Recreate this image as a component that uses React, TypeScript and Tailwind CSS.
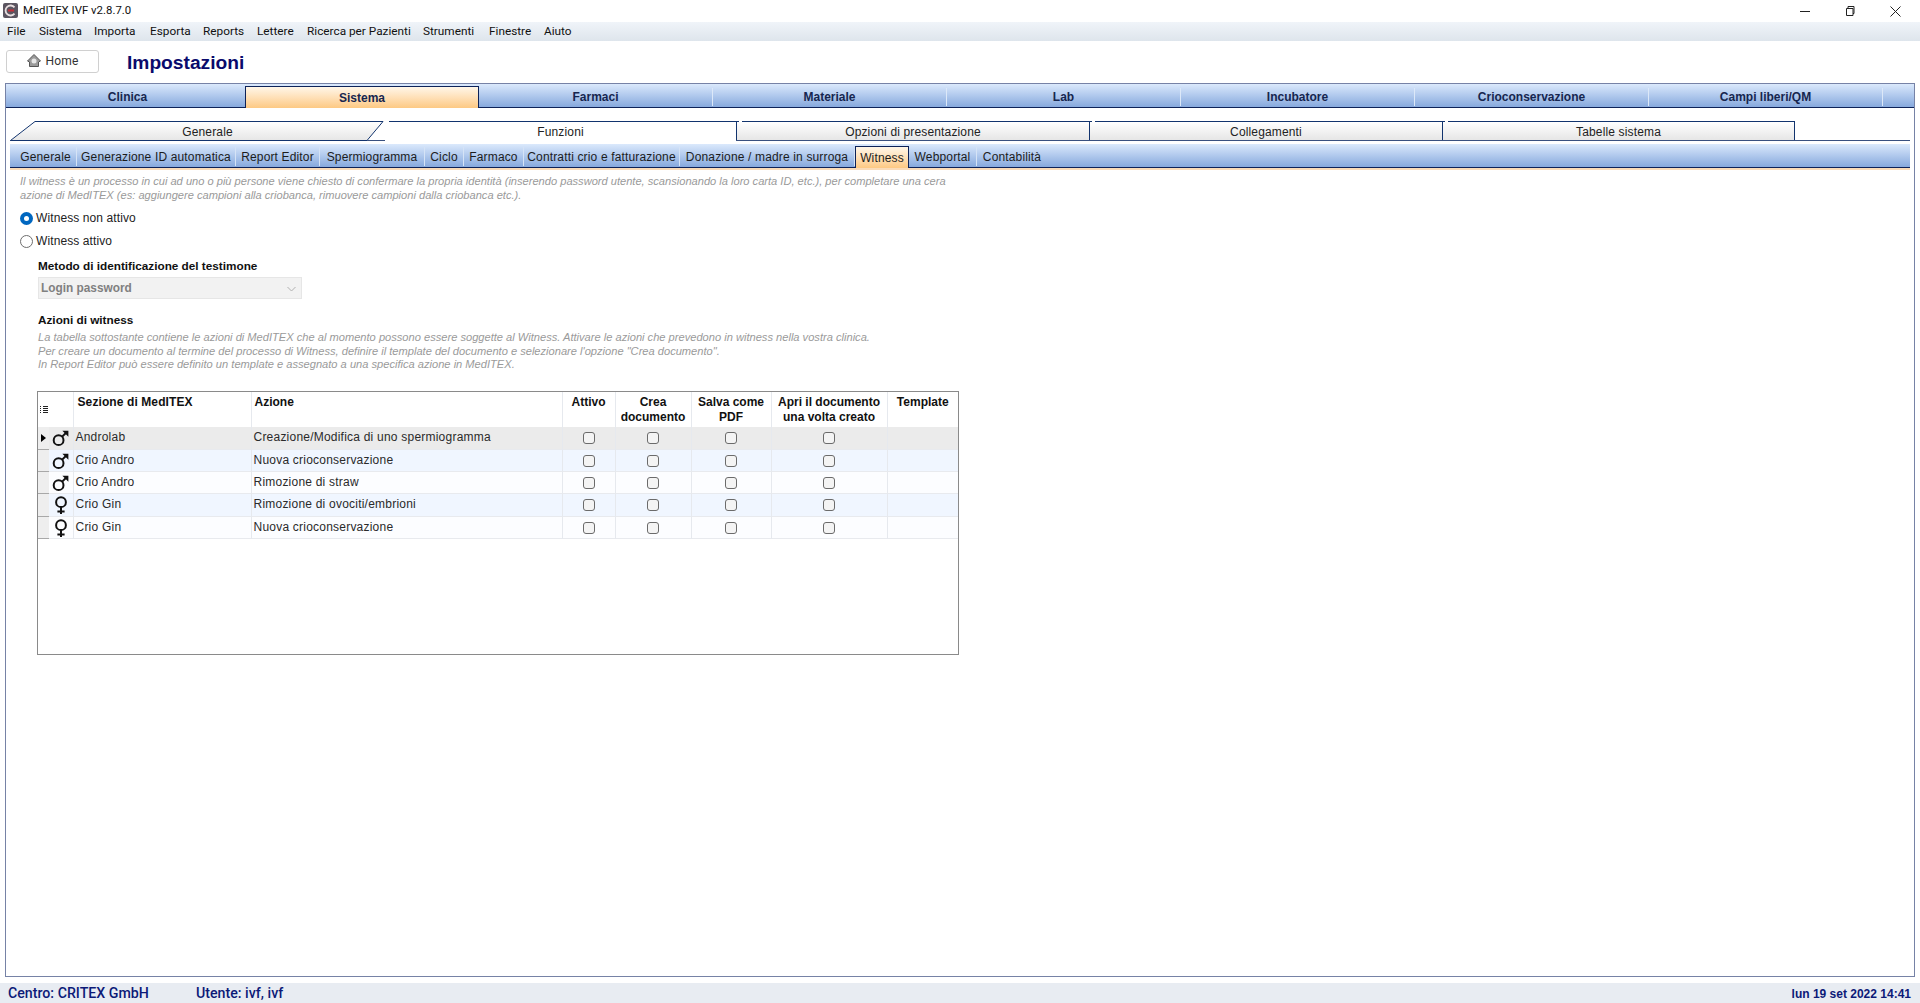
import React from "react";

const menu = [
  ["File", "w-[32px]"], ["Sistema", "w-[55px]"], ["Importa", "w-[56px]"], ["Esporta", "w-[53px]"], ["Reports", "w-[54px]"],
  ["Lettere", "w-[50px]"], ["Ricerca per Pazienti", "w-[116px]"], ["Strumenti", "w-[66px]"], ["Finestre", "w-[55px]"], ["Aiuto", "w-[40px]"],
];
const topTabs = ["Sistema", "Farmaci", "Materiale", "Lab", "Incubatore", "Crioconservazione", "Campi liberi/QM"];
const subTabs = [
  ["Generale", "w-[67px] pl-[5px]"], ["Generazione ID automatica", "w-[159px]"], ["Report Editor", "w-[84px]"], ["Spermiogramma", "w-[105px]"],
  ["Ciclo", "w-[39px]"], ["Farmaco", "w-[60px]"], ["Contratti crio e fatturazione", "w-[156px]"], ["Donazione / madre in surroga", "w-[175px]"],
];
const rows: [string, string, string, string][] = [
  ["m", "Androlab", "Creazione/Modifica di uno spermiogramma", "h-[23px] bg-[#ebebeb]"],
  ["m", "Crio Andro", "Nuova crioconservazione", "h-[22px] bg-[#f0f6ff]"],
  ["m", "Crio Andro", "Rimozione di straw", "h-[22px] bg-[#fcfdff]"],
  ["f", "Crio Gin", "Rimozione di ovociti/embrioni", "h-[23px] bg-[#f0f6ff]"],
  ["f", "Crio Gin", "Nuova crioconservazione", "h-[22px] bg-[#fcfdff]"],
];

function Mars() {
  return (
    <svg width="20" height="20" viewBox="0 0 20 20" fill="none" stroke="#111">
      <circle cx="7.6" cy="12.2" r="4.9" strokeWidth="2" />
      <path d="M11.2 8.6 15.6 4.2" strokeWidth="2" />
      <path d="M11.4 2.8h6v6z" fill="#111" stroke="none" />
    </svg>
  );
}
function Venus() {
  return (
    <svg width="20" height="20" viewBox="0 0 20 20" fill="none" stroke="#111" strokeWidth="2">
      <circle cx="10" cy="7.2" r="4.9" />
      <path d="M10 12v7M6.4 16.6h7.2" />
    </svg>
  );
}
function Check() {
  return <div className="mx-auto h-[12px] w-[12px] rounded-[3px] border border-[#6b6b6b] bg-[#f4f4f4]" />;
}
function Notch() {
  return <span className="absolute -top-[1px] left-[2px] h-[1px] w-[3px] bg-white" />;
}

export default function App() {
  return (
    <div className="flex h-[1003px] w-[1920px] flex-col overflow-hidden bg-white font-['Liberation_Sans',sans-serif] text-[12px] text-[#222]">
      <div className="flex h-[22px] items-center justify-between pl-[3px]">
        <div className="flex items-center gap-[5px] font-['Roboto',sans-serif] text-[11.4px] text-[#111]">
          <svg width="15" height="15" viewBox="0 0 15 15">
            <rect width="15" height="15" rx="2" fill="#5b5560" />
            <path d="M11.5 4.4A5 5 0 1 0 11.5 10.6" fill="none" stroke="#e9dfe0" strokeWidth="1.8" />
            <path d="M5 7.5h6" stroke="#c4303a" strokeWidth="2" />
          </svg>
          <span>MedITEX IVF v2.8.7.0</span>
        </div>
        <div className="flex items-center pr-[19px]">
          <svg width="10" height="10" viewBox="0 0 10 10" className="mr-[35px]" stroke="#222"><path d="M0 5.5h10" /></svg>
          <svg width="10" height="10" viewBox="0 0 10 10" className="mr-[35px]" fill="none" stroke="#222"><path d="M1.5 2.5h6.5v7h-6.5zM3 2.5V.5h6v7H8" /></svg>
          <svg width="11" height="11" viewBox="0 0 11 11" stroke="#222"><path d="M.5.5l10 10M10.5.5l-10 10" /></svg>
        </div>
      </div>

      <div className="flex h-[19px] items-center bg-gradient-to-b from-[#f0f4f9] to-[#dee5ec] pl-[2px] pt-[1px] font-['Roboto',sans-serif] text-[11.8px] text-[#111]">
        {menu.map(([t, w]) => (
          <span key={t} className={`${w} whitespace-nowrap pl-[5px]`}>{t}</span>
        ))}
      </div>

      <div className="flex h-[42px] items-start pl-[6px] pt-[9px]">
        <div className="flex h-[23px] w-[93px] items-center justify-center gap-[3px] rounded-[3px] border border-[#d0d0d0] bg-white pb-[2px] font-['Roboto',sans-serif] tracking-[0.2px] text-[#333]">
          <svg width="16" height="16" viewBox="0 0 16 16">
            <path d="M8 1.5 1.5 8 3.5 9v4.5h9V9L14.5 8z" fill="#9a9a9a" stroke="#555" strokeWidth="1" />
            <circle cx="8" cy="8" r="2.5" fill="#e6e6e6" />
          </svg>
          <span>Home</span>
        </div>
        <h1 className="ml-[28px] pt-[1px] text-[19.2px] font-bold leading-[24px] text-[#0a0a6c]">Impostazioni</h1>
      </div>

      <div className="mx-[5px] mb-[6px] flex flex-1 flex-col border border-[#7682a6]">
        <div className="flex h-[24px] border-b border-[#0d2258] bg-gradient-to-b from-[#dbe9fc] to-[#87a9dd] font-bold text-[#16264f]">
          <div className="flex w-[239px] items-center justify-center pl-[4px] pt-[2px]">Clinica</div>
          {topTabs.map((t) => (
            <div
              key={t}
              className={
                t === "Sistema"
                  ? "mt-[2px] flex h-[22px] w-[234px] items-center justify-center border-x border-t border-[#0d2258] bg-gradient-to-b from-[#fff6e8] to-[#fdc983] text-[#16264f]"
                  : "mt-[4px] flex h-[18px] w-[234px] items-center justify-center border-r border-[#dce8f8]"
              }
            >
              {t}
            </div>
          ))}
        </div>

        <div className="mx-[4px] mt-[13px] flex h-[20px] border-b border-[#39507f] text-center tracking-[0.15px] text-[#222]">
          <div className="relative flex w-[375px] items-center justify-center">
            <svg width="375" height="20" viewBox="0 0 375 20" className="absolute left-0 top-0">
              <defs>
                <linearGradient id="gt" x1="0" y1="0" x2="0" y2="1">
                  <stop offset="0" stopColor="#ffffff" />
                  <stop offset="1" stopColor="#e6e6e6" />
                </linearGradient>
              </defs>
              <path d="M.5 19.5 25 .5H373L357 19.5z" fill="url(#gt)" stroke="#12346e" />
            </svg>
            <span className="relative pl-[20px] pt-[3px]">Generale</span>
          </div>
          <div className="relative -mb-[1px] flex h-[20px] w-[351px] items-center justify-center bg-white pt-[1px]">
            <span className="absolute left-[4px] right-0 top-0 border-t border-[#12346e]" />
            Funzioni
          </div>
          {["Opzioni di presentazione", "Collegamenti", "Tabelle sistema"].map((t, i) => (
            <div
              key={t}
              className={
                i === 2
                  ? "relative flex w-[353px] items-center justify-center border-x border-t border-[#12346e] bg-gradient-to-b from-white to-[#e6e6e6] pt-[1px]"
                  : "relative flex w-[353px] items-center justify-center border-l border-t border-[#12346e] bg-gradient-to-b from-white to-[#e6e6e6] pt-[1px]"
              }
            >
              <Notch />
              {t}
            </div>
          ))}
        </div>

        <div className="mx-[4px] mt-[3px] flex h-[26px] border-b-[2px] border-[#fbdcb9] tracking-[0.15px] text-[#1c1c1c]">
          <div className="flex h-[24px] flex-1 border-b border-[#0d2258] bg-gradient-to-b from-[#dbe9fc] to-[#87a9dd]">
            {subTabs.map(([t, w]) => (
              <div key={t} className={`${w} mb-[1px] mt-[3px] flex items-center justify-center whitespace-nowrap border-r border-[#d5e3f6]`}>{t}</div>
            ))}
            <div className="mt-[2px] flex h-[22px] w-[54px] items-center justify-center border-x border-t border-[#0d2258] bg-gradient-to-b from-[#fff6e8] to-[#fdc983]">Witness</div>
            <div className="mb-[1px] mt-[3px] flex w-[68px] items-center justify-center border-r border-[#d5e3f6]">Webportal</div>
            <div className="mb-[1px] mt-[3px] flex w-[70px] items-center justify-center">Contabilità</div>
          </div>
        </div>

        <div className="flex flex-col pl-[14px]">
          <p className="mt-[4px] text-[11.1px] italic leading-[14px] text-[#9a9a9a]">
            Il witness è un processo in cui ad uno o più persone viene chiesto di confermare la propria identità (inserendo password utente, scansionando la loro carta ID, etc.), per completare una cera
            <br />
            azione di MedITEX (es: aggiungere campioni alla criobanca, rimuovere campioni dalla criobanca etc.).
          </p>
          <div className="mt-[6px] flex h-[20px] items-center gap-[3px] tracking-[0.1px]">
            <div className="flex h-[13px] w-[13px] items-center justify-center rounded-full bg-[#0067c0]">
              <div className="h-[5px] w-[5px] rounded-full bg-white" />
            </div>
            <span>Witness non attivo</span>
          </div>
          <div className="mt-[3px] flex h-[20px] items-center gap-[3px] tracking-[0.1px]">
            <div className="h-[13px] w-[13px] rounded-full border border-[#6e6e6e] bg-white" />
            <span>Witness attivo</span>
          </div>

          <div className="flex flex-col pl-[18px]">
            <div className="mt-[8px] h-[14px] text-[11.75px] font-bold leading-[14px] text-[#111]">Metodo di identificazione del testimone</div>
            <div className="mt-[4px] flex h-[22px] w-[264px] items-center justify-between border border-[#e6e6e6] bg-[#f2f2f2] pl-[2px] pr-[5px] pt-[1px] text-[11.85px] font-bold text-[#808080]">
              <span>Login password</span>
              <svg width="9" height="6" viewBox="0 0 9 6" fill="none" stroke="#b0b0b0"><path d="M.5 1 4.5 5l4-4" /></svg>
            </div>
            <div className="mt-[14px] h-[14px] text-[11.75px] font-bold leading-[14px] text-[#111]">Azioni di witness</div>
            <p className="mt-[4px] text-[11.12px] italic leading-[13.5px] text-[#9a9a9a]">
              La tabella sottostante contiene le azioni di MedITEX che al momento possono essere soggette al Witness. Attivare le azioni che prevedono in witness nella vostra clinica.
              <br />
              Per creare un documento al termine del processo di Witness, definire il template del documento e selezionare l'opzione "Crea documento".
              <br />
              In Report Editor può essere definito un template e assegnato a una specifica azione in MedITEX.
            </p>

            <div className="mt-[19px] h-[264px] w-[922px] -ml-[1px] border border-[#8a8a8a] bg-white">
              <table className="w-[920px] table-fixed border-collapse">
                <colgroup>
                  <col className="w-[11px]" />
                  <col className="w-[24px]" />
                  <col className="w-[178px]" />
                  <col className="w-[311px]" />
                  <col className="w-[53px]" />
                  <col className="w-[76px]" />
                  <col className="w-[80px]" />
                  <col className="w-[116px]" />
                  <col className="w-[71px]" />
                </colgroup>
                <thead>
                  <tr className="h-[35px] align-top text-[12px] font-bold leading-[15px] text-[#111]">
                    <th className="p-0 align-middle">
                      <svg width="8" height="9" viewBox="0 0 8 9" className="ml-[2px]" stroke="#222"><path d="M0 1.5h1M3 1.5h5M0 3.5h1M3 3.5h5M0 5.5h1M3 5.5h5M0 7.5h1M3 7.5h5" /></svg>
                    </th>
                    <th className="border-r border-[#e6e9ee] p-0" />
                    <th className="border-r border-[#e6e9ee] pl-[4px] pt-[3px] text-left font-bold tracking-[0.1px]">Sezione di MedITEX</th>
                    <th className="border-r border-[#e6e9ee] pl-[3px] pt-[3px] text-left font-bold">Azione</th>
                    <th className="border-r border-[#e6e9ee] pt-[3px] text-center font-bold">Attivo</th>
                    <th className="border-r border-[#e6e9ee] pt-[3px] text-center font-bold">Crea<br />documento</th>
                    <th className="border-r border-[#e6e9ee] pt-[3px] text-center font-bold">Salva come<br />PDF</th>
                    <th className="border-r border-[#e6e9ee] pt-[3px] text-center font-bold">Apri il documento<br />una volta creato</th>
                    <th className="pt-[3px] text-center font-bold">Template</th>
                  </tr>
                </thead>
                <tbody className="text-[12px] tracking-[0.22px] text-[#2a2a2a]">
                  {rows.map(([g, s, a, cls], i) => (
                    <tr key={a + i} className={`${cls} border-b border-[#e8eaee]`}>
                      <td className="border-b border-[#a8a8a8] bg-[#eeeeee] p-0">
                        {i === 0 && <div className="ml-[3px] h-0 w-0 border-y-[4px] border-l-[5px] border-y-transparent border-l-black" />}
                      </td>
                      <td className="border-r border-[#e6e9ee] p-0">
                        <div className="flex justify-center">{g === "m" ? <Mars /> : <Venus />}</div>
                      </td>
                      <td className="border-r border-[#e6e9ee] pb-[2px] pl-[2px]">{s}</td>
                      <td className="border-r border-[#e6e9ee] pb-[2px] pl-[2px]">{a}</td>
                      <td className="border-r border-[#e6e9ee]"><Check /></td>
                      <td className="border-r border-[#e6e9ee]"><Check /></td>
                      <td className="border-r border-[#e6e9ee]"><Check /></td>
                      <td className="border-r border-[#e6e9ee]"><Check /></td>
                      <td />
                    </tr>
                  ))}
                </tbody>
              </table>
            </div>
          </div>
        </div>
      </div>

      <div className="flex h-[20px] items-center justify-between bg-[#e8ecf2] pl-[8px] pr-[9px] pt-[1px] text-[14.2px] font-bold text-[#0c1a78]">
        <div className="flex">
          <span className="w-[188px] font-['Roboto',sans-serif] font-medium">Centro: CRITEX GmbH</span>
          <span className="font-['Roboto',sans-serif] font-medium">Utente: ivf, ivf</span>
        </div>
        <span className="text-[12px]">lun 19 set 2022 14:41</span>
      </div>
    </div>
  );
}
